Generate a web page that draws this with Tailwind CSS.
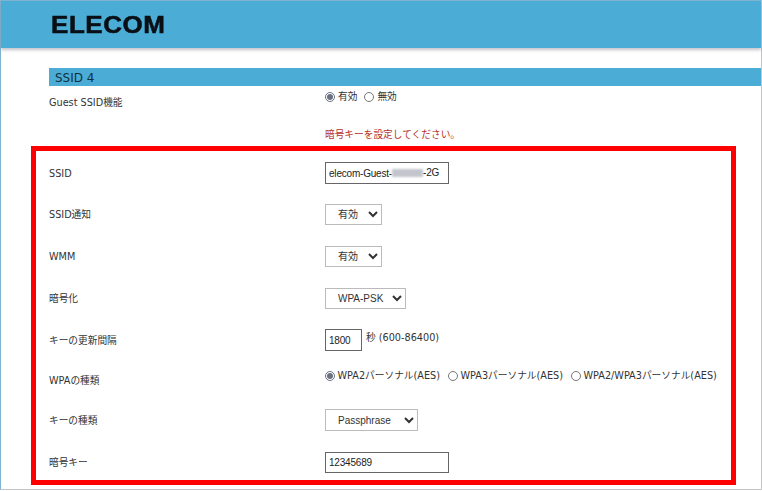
<!DOCTYPE html>
<html lang="ja">
<head>
  <meta charset="UTF-8" />
  <meta name="viewport" content="width=device-width, initial-scale=1" />
  <title>SSID 4</title>
  <script src="https://cdn.jsdelivr.net/npm/@tailwindcss/browser@4"></script>
</head>
<body class="bg-white font-['DejaVu_Sans','Noto_Sans_CJK_JP',sans-serif] text-[9.7px] text-[#333]">
  <div class="h-[491px] w-[762px] overflow-hidden">
    <div class="h-[490px] border-t border-l border-r border-b border-t-[#7fb5d0] border-l-[#7fb5d0] border-r-[#c4c4c4] border-b-[#c4c4c4]">
      <header class="h-[47px] bg-[#4badd6] pl-[50px] pt-[8px] shadow-[0_2px_3px_rgba(120,120,140,0.45)]">
        <span class="block w-fit origin-left scale-x-[1.13] font-['Liberation_Sans',sans-serif] text-[23px] leading-[32px] font-bold tracking-[0.5px] text-[#0a0f16] [-webkit-text-stroke:0.5px_#0a0f16]">ELECOM</span>
      </header>

      <div class="mt-[20px] ml-[48px] flex h-[18px] items-center bg-[#4badd6] pl-[6px] pt-[1px] text-[12px] text-[#12303f]">SSID 4</div>

      <div class="mt-[4px] grid h-[20px] grid-cols-[324px_1fr]">
        <div class="pt-[6px] pl-[48px]">Guest SSID機能</div>
        <div class="flex items-center gap-[3px] pb-[7px] text-[#333]">
          <input type="radio" name="guest" checked class="h-[10px] w-[10px] accent-gray-500" />
          <span class="mr-[4px]">有効</span>
          <input type="radio" name="guest" class="h-[10px] w-[10px]" />
          <span>無効</span>
        </div>
      </div>

      <p class="mt-[19px] h-[12px] pl-[324px] leading-[12px] text-[#b5301f]">暗号キーを設定してください。</p>

      <section class="mt-[5px] ml-[30px] h-[339px] w-[705px] border-[5px] border-[#ff0000] pl-[13px]">
        <div class="grid h-[43px] grid-cols-[276px_1fr] items-center pt-[1px]">
          <div class="pt-[2px]">SSID</div>
          <div class="relative w-fit">
            <input type="text" value="elecom-Guest-" class="h-[22px] w-[124px] border border-[#666] bg-white px-[3px] font-['Liberation_Sans',sans-serif] text-[10px] tracking-[-0.2px] text-[#222]" />
            <span class="absolute top-[7px] left-[67px] h-[8px] w-[31px] bg-[#c2c5cc] blur-[1px]"></span>
            <span class="absolute top-[5px] left-[98px] font-['Liberation_Sans',sans-serif] text-[10px] leading-[12px] tracking-[-0.2px] text-[#222]">-2G</span>
          </div>
        </div>
        <div class="grid h-[41px] grid-cols-[276px_1fr] items-center">
          <div class="pt-[2px]">SSID通知</div>
          <div><select class="h-[21px] w-[57px] rounded-none border border-[#bbb] bg-white pl-[8px] font-['Liberation_Sans','Noto_Sans_CJK_JP',sans-serif] text-[10px]"><option>有効</option></select></div>
        </div>
        <div class="grid h-[42px] grid-cols-[276px_1fr] items-center">
          <div class="pt-[2px]">WMM</div>
          <div><select class="h-[21px] w-[57px] rounded-none border border-[#bbb] bg-white pl-[8px] font-['Liberation_Sans','Noto_Sans_CJK_JP',sans-serif] text-[10px]"><option>有効</option></select></div>
        </div>
        <div class="grid h-[42px] grid-cols-[276px_1fr] items-center">
          <div class="pt-[2px]">暗号化</div>
          <div><select class="h-[21px] w-[81px] rounded-none border border-[#bbb] bg-white pl-[8px] font-['Liberation_Sans','Noto_Sans_CJK_JP',sans-serif] text-[10px]"><option>WPA-PSK</option></select></div>
        </div>
        <div class="grid h-[42px] grid-cols-[276px_1fr] items-center">
          <div class="pt-[2px]">キーの更新間隔</div>
          <div class="flex items-center gap-[4px]">
            <input type="text" value="1800" class="h-[22px] w-[37px] border border-[#666] bg-white px-[3px] font-['Liberation_Sans',sans-serif] text-[10px] tracking-[-0.2px] text-[#222]" />
            <span class="pb-[3px]">秒 (600-86400)</span>
          </div>
        </div>
        <div class="grid h-[38px] grid-cols-[276px_1fr] items-center">
          <div class="pt-[2px]">WPAの種類</div>
          <div class="flex items-center gap-[2.5px] pb-[8px]">
            <input type="radio" name="wpa" checked class="h-[10px] w-[10px] accent-gray-500" />
            <span class="mr-[5.5px]">WPA2パーソナル(AES)</span>
            <input type="radio" name="wpa" class="h-[10px] w-[10px]" />
            <span class="mr-[5.5px]">WPA3パーソナル(AES)</span>
            <input type="radio" name="wpa" class="h-[10px] w-[10px]" />
            <span>WPA2/WPA3パーソナル(AES)</span>
          </div>
        </div>
        <div class="grid h-[42px] grid-cols-[276px_1fr] items-center">
          <div class="pt-[2px]">キーの種類</div>
          <div><select class="h-[22px] w-[93px] rounded-none border border-[#bbb] bg-white pl-[8px] font-['Liberation_Sans','Noto_Sans_CJK_JP',sans-serif] text-[10px]"><option>Passphrase</option></select></div>
        </div>
        <div class="grid h-[42px] grid-cols-[276px_1fr] items-center">
          <div class="pt-[2px]">暗号キー</div>
          <div><input type="text" value="12345689" class="h-[21px] w-[124px] border border-[#666] bg-white px-[3px] font-['Liberation_Sans',sans-serif] text-[10px] tracking-[-0.2px] text-[#222]" /></div>
        </div>
      </section>
    </div>
  </div>
</body>
</html>
